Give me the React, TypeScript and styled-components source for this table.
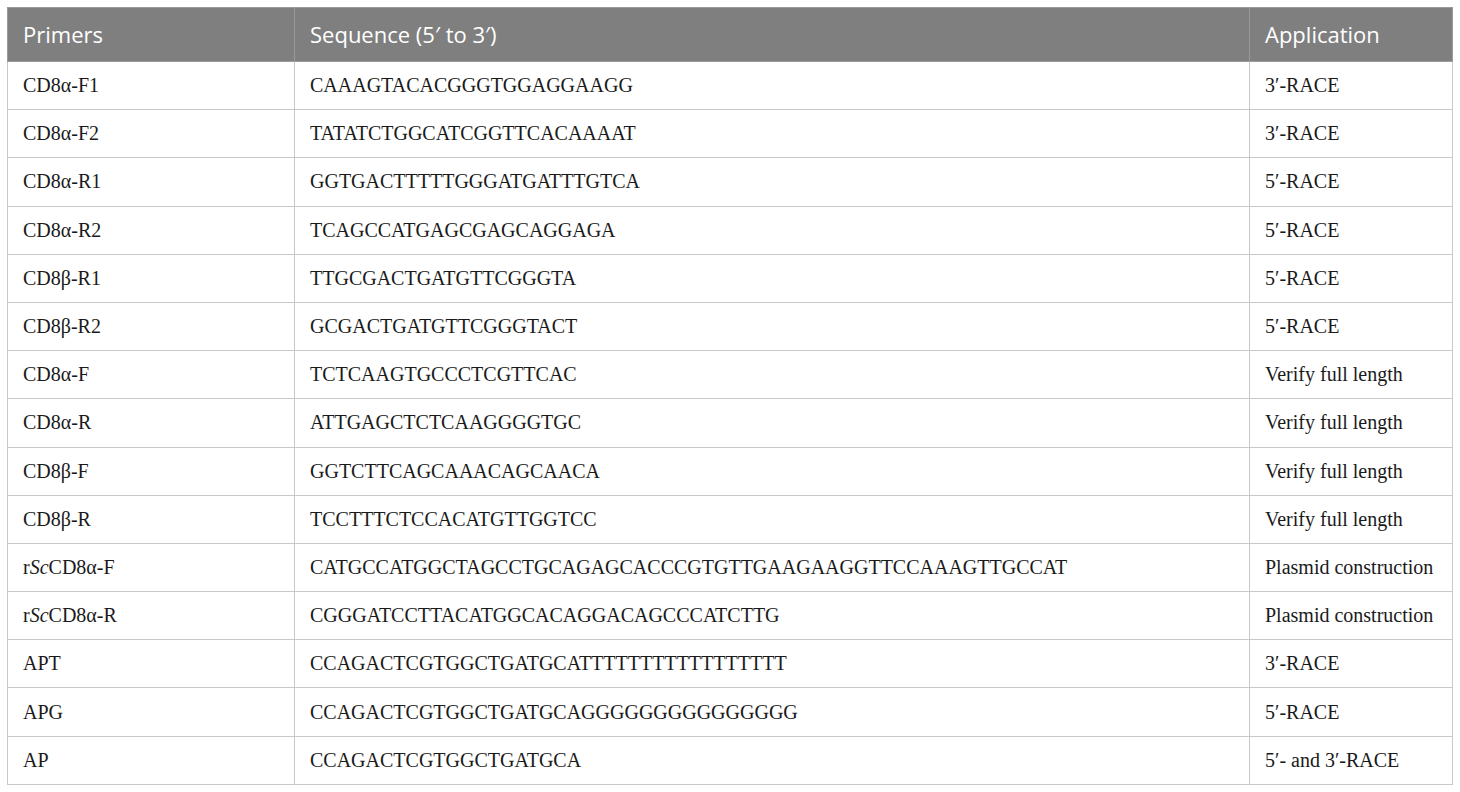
import React from "react";
import styled, { createGlobalStyle } from "styled-components";

type Row = {
  primer: React.ReactNode;
  sequence: string;
  application: string;
};

const GlobalStyle = createGlobalStyle`
  html, body {
    margin: 0;
    padding: 0;
    background: #ffffff;
  }
`;

const rows: Row[] = [
  { primer: "CD8α-F1", sequence: "CAAAGTACACGGGTGGAGGAAGG", application: "3′-RACE" },
  { primer: "CD8α-F2", sequence: "TATATCTGGCATCGGTTCACAAAAT", application: "3′-RACE" },
  { primer: "CD8α-R1", sequence: "GGTGACTTTTTGGGATGATTTGTCA", application: "5′-RACE" },
  { primer: "CD8α-R2", sequence: "TCAGCCATGAGCGAGCAGGAGA", application: "5′-RACE" },
  { primer: "CD8β-R1", sequence: "TTGCGACTGATGTTCGGGTA", application: "5′-RACE" },
  { primer: "CD8β-R2", sequence: "GCGACTGATGTTCGGGTACT", application: "5′-RACE" },
  { primer: "CD8α-F", sequence: "TCTCAAGTGCCCTCGTTCAC", application: "Verify full length" },
  { primer: "CD8α-R", sequence: "ATTGAGCTCTCAAGGGGTGC", application: "Verify full length" },
  { primer: "CD8β-F", sequence: "GGTCTTCAGCAAACAGCAACA", application: "Verify full length" },
  { primer: "CD8β-R", sequence: "TCCTTTCTCCACATGTTGGTCC", application: "Verify full length" },
  {
    primer: (
      <>
        r<em>Sc</em>CD8α-F
      </>
    ),
    sequence: "CATGCCATGGCTAGCCTGCAGAGCACCCGTGTTGAAGAAGGTTCCAAAGTTGCCAT",
    application: "Plasmid construction",
  },
  {
    primer: (
      <>
        r<em>Sc</em>CD8α-R
      </>
    ),
    sequence: "CGGGATCCTTACATGGCACAGGACAGCCCATCTTG",
    application: "Plasmid construction",
  },
  { primer: "APT", sequence: "CCAGACTCGTGGCTGATGCATTTTTTTTTTTTTTTTT", application: "3′-RACE" },
  { primer: "APG", sequence: "CCAGACTCGTGGCTGATGCAGGGGGGGGGGGGGGG", application: "5′-RACE" },
  { primer: "AP", sequence: "CCAGACTCGTGGCTGATGCA", application: "5′- and 3′-RACE" },
];

const Page = styled.div`
  padding: 7px 8px 0 7px;
`;

const Table = styled.table`
  width: 1445px;
  border-collapse: collapse;
  table-layout: fixed;
`;

const Col = styled.col<{ $w: number }>`
  width: ${(p) => p.$w}px;
`;

const HeadCell = styled.th`
  height: 51px;
  padding: 0 14px 2px 15px;
  background: #7f7f7f;
  color: #ffffff;
  border: 1px solid #9a9a9a;
  font-family: "Open Sans", "Noto Sans", sans-serif;
  font-size: 22px;
  font-weight: 400;
  text-align: left;
  vertical-align: middle;
`;

const Cell = styled.td`
  height: 47.2px;
  padding: 0 14px 0 15px;
  border: 1px solid #c8c8c8;
  color: #1a1a1a;
  font-family: "Liberation Serif", "Times New Roman", serif;
  font-size: 20px;
  vertical-align: middle;
  white-space: nowrap;

  em {
    font-style: italic;
  }
`;

export default function App() {
  return (
    <Page>
      <GlobalStyle />
      <Table>
        <colgroup>
          <Col $w={287} />
          <Col $w={955} />
          <Col $w={203} />
        </colgroup>
        <thead>
          <tr>
            <HeadCell>Primers</HeadCell>
            <HeadCell>Sequence (5′ to 3′)</HeadCell>
            <HeadCell>Application</HeadCell>
          </tr>
        </thead>
        <tbody>
          {rows.map((r, i) => (
            <tr key={i}>
              <Cell>{r.primer}</Cell>
              <Cell>{r.sequence}</Cell>
              <Cell>{r.application}</Cell>
            </tr>
          ))}
        </tbody>
      </Table>
    </Page>
  );
}
